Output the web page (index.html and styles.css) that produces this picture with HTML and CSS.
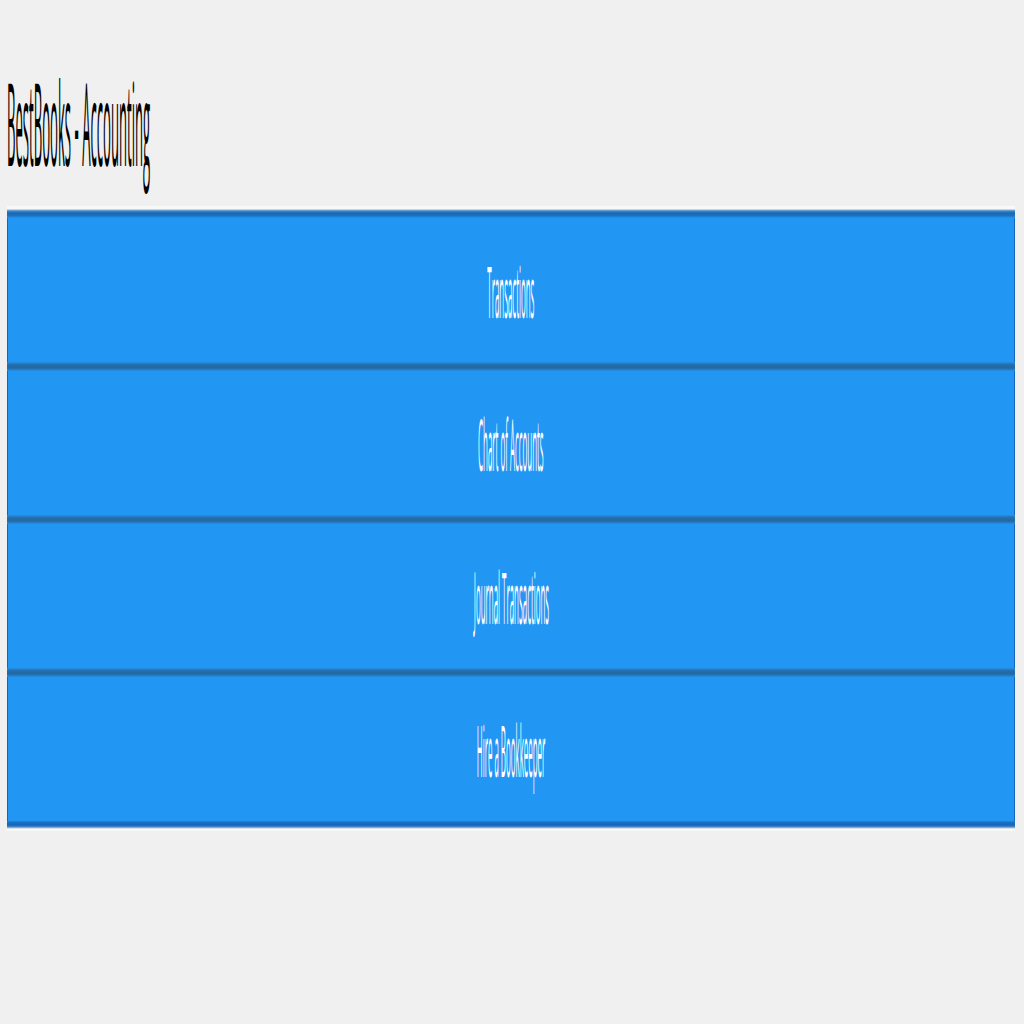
FILE: index.html
```html
<!DOCTYPE html>
<html>
<head>
<meta charset="utf-8">
<title>BestBooks - Accounting</title>
<link rel="stylesheet" href="styles.css">
</head>
<body>
<header class="header">
  <h1 class="title"><span class="squish squish-left">BestBooks - Accounting</span></h1>
</header>
<nav class="menu">
  <div class="edge-top"></div>
  <a class="item"><span class="squish">Transactions</span></a>
  <div class="sep"></div>
  <a class="item"><span class="squish">Chart of Accounts</span></a>
  <div class="sep"></div>
  <a class="item"><span class="squish">Journal Transactions</span></a>
  <div class="sep"></div>
  <a class="item"><span class="squish">Hire a Bookkeeper</span></a>
  <div class="edge-bottom"></div>
</nav>
</body>
</html>
```
FILE: styles.css
```css
html, body {
  margin: 0;
  padding: 0;
  background: #f0f0f0;
}
body {
  padding: 0 9px 0 7px;
  font-family: "Open Sans", "Noto Sans", sans-serif;
}
.header {
  height: 206px;
  overflow: hidden;
}
.title {
  margin: 0;
  padding-top: 52px;
  font-weight: 400;
  font-size: 116px;
  line-height: 138px;
  color: #000;
  white-space: nowrap;
}
.squish {
  display: inline-block;
  white-space: nowrap;
  transform: scaleX(0.11);
  transform-origin: center;
}
.squish-left {
  transform: scaleX(0.113);
  transform-origin: left center;
}
.menu {
  display: flex;
  flex-direction: column;
}
.edge-top {
  height: 12px;
  background: linear-gradient(to bottom, #f8f8f8 0, #f8f8f8 3px, #8ab6da 4px, #3f86c6 5px, #1b69b4 7px, #1a6cbc 9px, #1f84dc 11px, #2196f3 12px);
}
.item {
  height: 144px;
  display: flex;
  align-items: center;
  justify-content: center;
  background: #2196f3;
  border-left: 1px solid #1565c0;
  border-right: 1px solid #1565c0;
  color: #fff;
  font-size: 72px;
  font-weight: 400;
  line-height: 1;
  overflow: hidden;
}
.sep {
  height: 9px;
  background: linear-gradient(to bottom, #2196f3 0, #2680cc 1px, #256ca8 3px, #236aa3 6px, #2680cc 8px, #2196f3 9px);
}
.edge-bottom {
  height: 10px;
  background: linear-gradient(to bottom, #1f84dc 0, #1a6cbc 2px, #1565c0 4px, #4f88c0 6px, #b8cde0 7px, #f8f8f4 8px, #f8f8f4 10px);
}
```
